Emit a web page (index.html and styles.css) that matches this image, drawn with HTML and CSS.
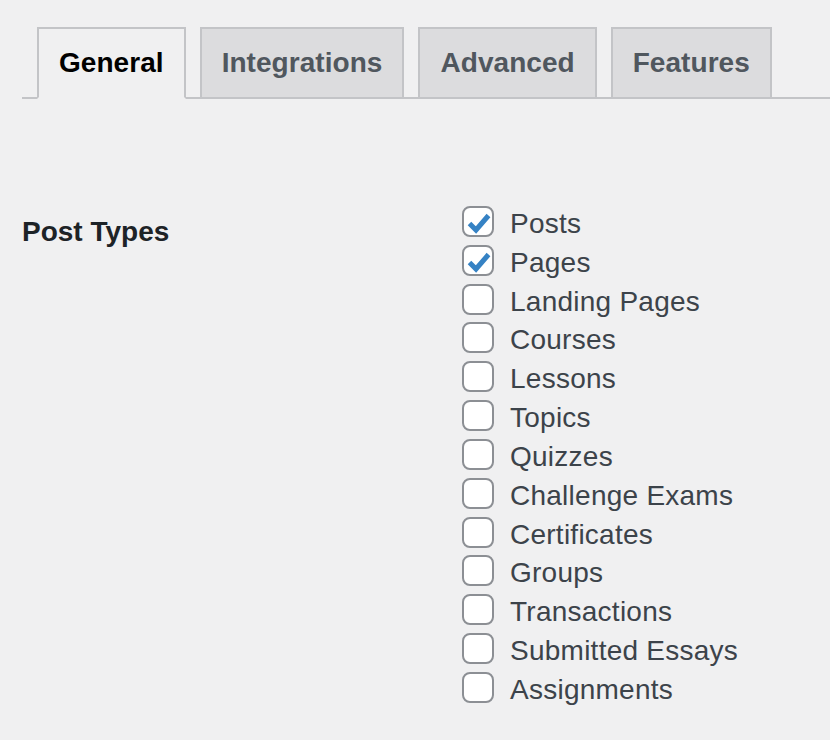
FILE: index.html
```html
<!DOCTYPE html>
<html>
<head>
    <title>Settings</title>
    <meta name="viewport" content="width=device-width, initial-scale=1">
    <link rel="stylesheet" href="styles.css">
</head>
<body>
    <div class="wrap">
        <nav class="nav-tabs">
            <a class="nav-tab active" href="#">General</a>
            <a class="nav-tab" href="#">Integrations</a>
            <a class="nav-tab" href="#">Advanced</a>
            <a class="nav-tab" href="#">Features</a>
        </nav>

        <div class="form-row">
            <div class="form-label">Post Types</div>
            <div class="check-list">
                <label class="check"><span class="box checked"><svg viewBox="0 0 28 27"><path d="M5.5 15.5 L12 22 L24.5 7.5"/></svg></span>Posts</label>
                <label class="check"><span class="box checked"><svg viewBox="0 0 28 27"><path d="M5.5 15.5 L12 22 L24.5 7.5"/></svg></span>Pages</label>
                <label class="check"><span class="box"></span>Landing Pages</label>
                <label class="check"><span class="box"></span>Courses</label>
                <label class="check"><span class="box"></span>Lessons</label>
                <label class="check"><span class="box"></span>Topics</label>
                <label class="check"><span class="box"></span>Quizzes</label>
                <label class="check"><span class="box"></span>Challenge Exams</label>
                <label class="check"><span class="box"></span>Certificates</label>
                <label class="check"><span class="box"></span>Groups</label>
                <label class="check"><span class="box"></span>Transactions</label>
                <label class="check"><span class="box"></span>Submitted Essays</label>
                <label class="check"><span class="box"></span>Assignments</label>
            </div>
        </div>
    </div>
</body>
</html>
```

FILE: styles.css
```css
body {
    margin: 0;
    background-color: #f0f0f1;
    font-family: "Liberation Sans", Arial, sans-serif;
    color: #3c434a;
}
.wrap {
    padding: 27px 0 0 22px;
}
.nav-tabs {
    display: flex;
    gap: 14px;
    padding-left: 15px;
    border-bottom: 2px solid #c3c4c7;
}
.nav-tab {
    display: block;
    margin-bottom: -2px;
    padding: 10px 20px;
    line-height: 48px;
    font-size: 28px;
    font-weight: bold;
    letter-spacing: 0.05px;
    color: #50575e;
    text-decoration: none;
    background-color: #dcdcde;
    border: 2px solid #c3c4c7;
}
.nav-tab.active {
    color: #000;
    background-color: #f0f0f1;
    border-bottom-color: #f0f0f1;
}
.form-row {
    display: grid;
    grid-template-columns: 440px 1fr;
    margin-top: 106px;
}
.form-label {
    padding-top: 7px;
    font-size: 28px;
    line-height: 39px;
    font-weight: bold;
    color: #1d2327;
}
.check-list {
    display: flex;
    flex-direction: column;
}
.check {
    display: flex;
    align-items: center;
    height: 38.83px;
    font-size: 28px;
    line-height: 38.83px;
    letter-spacing: 0.25px;
}
.box {
    box-sizing: border-box;
    width: 32px;
    height: 31px;
    margin: -6px 16px 0 0;
    border: 2px solid #8c8f94;
    border-radius: 8px;
    background-color: #fff;
    flex-shrink: 0;
}
.box svg {
    display: block;
    width: 28px;
    height: 27px;
}
.box svg path {
    fill: none;
    stroke: #3582c4;
    stroke-width: 5;
}
```
